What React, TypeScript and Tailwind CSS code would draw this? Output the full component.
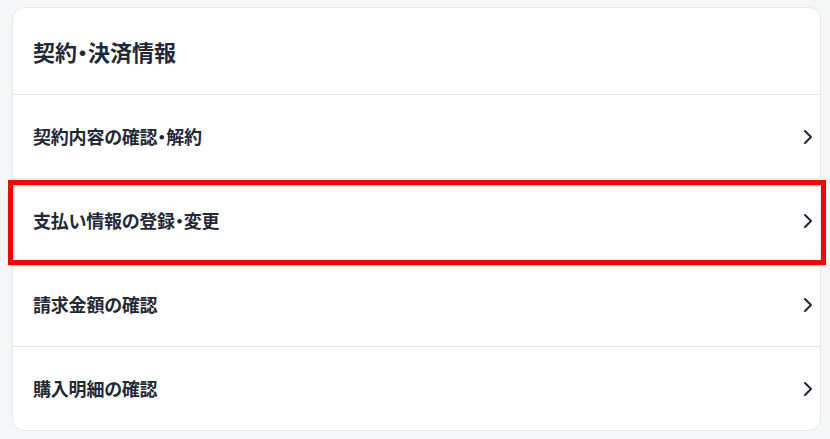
import { ChevronRight } from "lucide-react";

const ITEMS = [
  { label: "契約内容の確認・解約", highlighted: false },
  { label: "支払い情報の登録・変更", highlighted: true },
  { label: "請求金額の確認", highlighted: false },
  { label: "購入明細の確認", highlighted: false },
];

function MenuRow({ label, highlighted }: { label: string; highlighted: boolean }) {
  return (
    <li className="relative border-t border-[#e5e7eb]">
      <a
        href="#"
        className="flex h-[83px] items-center justify-between pl-5 pr-0 text-[18px] font-bold tracking-[-0.2px] text-[#1f2937]"
      >
        <span>{label}</span>
        <ChevronRight className="h-6 w-6 text-[#1f2937]" strokeWidth={2} />
      </a>
      {/* annotation box around the selected row */}
      {highlighted && (
        <div className="pointer-events-none absolute z-10 -left-[5px] -right-[6px] top-[1px] -bottom-[3px] border-[5px] border-[#ff0000]" />
      )}
    </li>
  );
}

export default function App() {
  return (
    <div
      className="min-h-[439px] bg-[#f5f6f8] pt-[7px] pl-3 pr-[9px] pb-[9px]"
      style={{ fontFamily: '"Noto Sans CJK JP", "Noto Sans", sans-serif' }}
    >
      <section className="rounded-xl border border-[#e5e7eb] bg-white [font-feature-settings:'palt']">
        <h2 className="flex h-[86px] items-center pl-5 text-[22px] font-bold text-[#1f2937]">
          契約・決済情報
        </h2>
        <ul>
          {ITEMS.map((item) => (
            <MenuRow key={item.label} {...item} />
          ))}
        </ul>
      </section>
    </div>
  );
}
